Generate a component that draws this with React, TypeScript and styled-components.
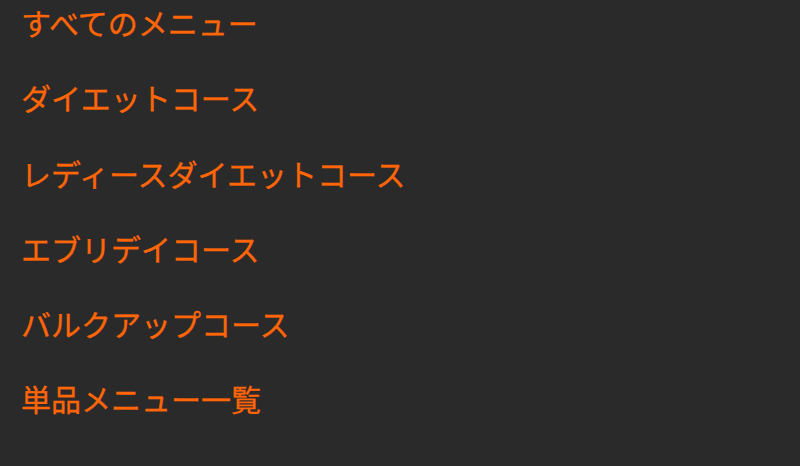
import React from "react";
import styled, { createGlobalStyle } from "styled-components";

const GlobalStyle = createGlobalStyle`
  html, body {
    margin: 0;
    padding: 0;
    background: #2a2a2a;
  }
  body {
    font-family: "Noto Sans CJK JP", "Noto Sans", sans-serif;
  }
`;

const Page = styled.div`
  width: 800px;
  height: 466px;
  background: #2a2a2a;
  overflow: hidden;
`;

const MenuList = styled.ul`
  list-style: none;
  margin: 0;
  padding: 0 0 0 21px;
  display: flex;
  flex-direction: column;
  gap: 31.3px;
`;

const MenuItem = styled.li`
  margin: 0;
`;

const MenuLink = styled.a`
  display: block;
  color: #ff6608;
  font-size: 30px;
  font-weight: 400;
  line-height: 44px;
  text-decoration: none;
  white-space: nowrap;
  -webkit-text-stroke: 0.3px #ff6608;
`;

const items = [
  "すべてのメニュー",
  "ダイエットコース",
  "レディースダイエットコース",
  "エブリデイコース",
  "バルクアップコース",
  "単品メニュー一覧",
];

export default function App() {
  return (
    <>
      <GlobalStyle />
      <Page>
        <MenuList>
          {items.map((label) => (
            <MenuItem key={label}>
              <MenuLink href="#">{label}</MenuLink>
            </MenuItem>
          ))}
        </MenuList>
      </Page>
    </>
  );
}
